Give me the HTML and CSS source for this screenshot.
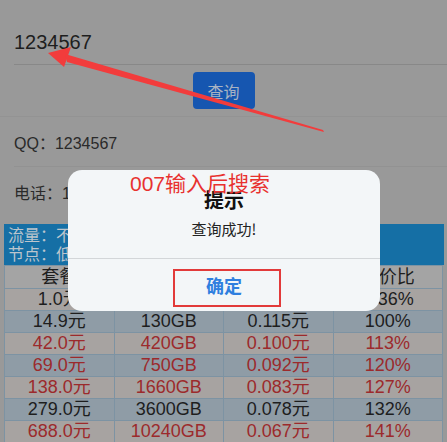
FILE: index.html
```html
<!DOCTYPE html>
<html lang="zh-CN">

<head>
    <meta charset="UTF-8">
    <meta name="viewport" content="width=device-width, initial-scale=1.0">
    <title>查询</title>
    <link rel="stylesheet" href="styles.css">
</head>

<body>
    <div class="page">
        <div class="search">
            <div class="search-input">1234567</div>
            <div class="search-btn-row">
                <button type="button" class="search-btn">查询</button>
            </div>
        </div>
        <div class="info">
            <div class="info-row">QQ：1234567</div>
            <div class="info-row last">电话：134****8196</div>
        </div>
        <div class="notice">
            <div>流量：不过期，不限速</div>
            <div>节点：低价套餐与高价套餐节点完全相同</div>
        </div>
        <table class="plans">
            <tr class="head">
                <td>套餐</td><td>流量</td><td>单价</td><td>性价比</td>
            </tr>
            <tr class="warm">
                <td>1.0元</td><td>2GB</td><td>0.500元</td><td>-436%</td>
            </tr>
            <tr class="cool">
                <td>14.9元</td><td>130GB</td><td>0.115元</td><td>100%</td>
            </tr>
            <tr class="warm hot">
                <td>42.0元</td><td>420GB</td><td>0.100元</td><td>113%</td>
            </tr>
            <tr class="cool hot">
                <td>69.0元</td><td>750GB</td><td>0.092元</td><td>120%</td>
            </tr>
            <tr class="warm hot">
                <td>138.0元</td><td>1660GB</td><td>0.083元</td><td>127%</td>
            </tr>
            <tr class="cool">
                <td>279.0元</td><td>3600GB</td><td>0.078元</td><td>132%</td>
            </tr>
            <tr class="warm hot">
                <td>688.0元</td><td>10240GB</td><td>0.067元</td><td>141%</td>
            </tr>
        </table>
    </div>

    <div class="dialog">
        <div class="dialog-body">
            <div class="dialog-title">提示</div>
            <div class="dialog-msg">查询成功!</div>
        </div>
        <div class="dialog-foot">
            <span class="dialog-ok">确定</span>
        </div>
        <div class="dialog-mark"></div>
    </div>

    <div class="note">007输入后搜索</div>

    <svg class="arrow" width="447" height="442" viewBox="0 0 447 442">
        <polygon points="48,53 71,47 64,67" fill="#f23c3c" />
        <polygon points="65,54 67,62 324,132 323,130" fill="#f23c3c" />
    </svg>
</body>

</html>
```

FILE: styles.css
```css
html,
body {
    margin: 0;
    padding: 0;
}

body {
    background-color: #999999;
    font-family: "Liberation Sans", "Noto Sans CJK SC", sans-serif;
    color: #1e1e1e;
    width: 447px;
    height: 442px;
    overflow: hidden;
    position: relative;
}

.search {
    padding-left: 14px;
}

.search .search-input {
    height: 65px;
    box-sizing: border-box;
    padding-top: 30px;
    font-size: 20px;
    line-height: 24px;
    border-bottom: 1px solid #888888;
}

.search .search-btn-row {
    display: flex;
    justify-content: center;
    padding: 7px 0 0 0;
    height: 52px;
    box-sizing: border-box;
    margin-left: -14px;
    border-bottom: 1px solid #939393;
}

.search .search-btn {
    width: 62px;
    height: 37px;
    border: none;
    border-radius: 4px;
    background-color: #1656b0;
    color: #a8b3c3;
    font-family: "Noto Sans CJK SC", sans-serif;
    font-size: 16px;
    padding: 0;
}

.info {
    padding-left: 14px;
}

.info .info-row {
    height: 50px;
    box-sizing: border-box;
    display: flex;
    align-items: center;
    font-size: 16px;
    color: #2a2a2a;
    border-bottom: 1px solid #929292;
}

.info .info-row.last {
    border-bottom: none;
}

.notice {
    margin: 7px 3px 0 4px;
    height: 41px;
    box-sizing: border-box;
    padding: 1px 4px;
    background-color: #156fa5;
    color: #bcc5cd;
    font-family: "Noto Sans CJK SC", sans-serif;
    font-size: 16px;
    line-height: 19px;
}

.plans {
    margin-left: 4px;
    width: 439px;
    border-collapse: collapse;
    table-layout: fixed;
}

.plans td {
    height: 21px;
    padding: 0;
    text-align: center;
    font-size: 18px;
    line-height: 21px;
    border: 1px solid #7d93a3;
    color: #1e1e1e;
}

.plans .head td {
    background-color: #a4a4a4;
    height: 22px;
}

.plans .warm td {
    background-color: #a7a3a1;
}

.plans .cool td {
    background-color: #8f9ca6;
}

.plans .hot td {
    color: #9c2a2c;
}

.dialog {
    position: absolute;
    left: 68px;
    top: 170px;
    width: 312px;
    height: 141px;
    background-color: #f3f6f8;
    border-radius: 14px;
    font-family: "Noto Sans CJK SC", sans-serif;
}

.dialog .dialog-body {
    height: 89px;
    box-sizing: border-box;
    padding-top: 17px;
    text-align: center;
    border-bottom: 1px solid #d3d6d9;
}

.dialog .dialog-title {
    font-size: 20px;
    font-weight: 700;
    line-height: 26px;
    color: #111111;
}

.dialog .dialog-msg {
    margin-top: 6px;
    font-size: 15px;
    line-height: 20px;
    color: #222222;
}

.dialog .dialog-foot {
    height: 51px;
    display: flex;
    justify-content: center;
    align-items: center;
}

.dialog .dialog-ok {
    font-size: 18px;
    font-weight: 700;
    color: #2f7fdf;
}

.dialog .dialog-mark {
    position: absolute;
    left: 105px;
    top: 99px;
    width: 104px;
    height: 34px;
    border: 2px solid #e23a3a;
}

.note {
    position: absolute;
    left: 130px;
    top: 170px;
    font-family: "Liberation Sans", "Noto Sans CJK SC", sans-serif;
    font-size: 21px;
    line-height: 28px;
    color: #e8312f;
}

.arrow {
    position: absolute;
    left: 0;
    top: 0;
}
```
